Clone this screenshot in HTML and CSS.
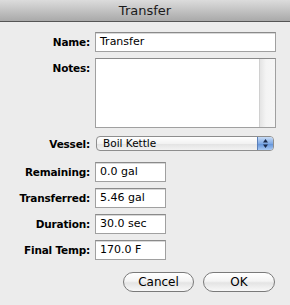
FILE: index.html
```html
<!DOCTYPE html>
<html>
<head>
<meta charset="utf-8">
<link rel="stylesheet" href="styles.css">
</head>
<body>
<div class="titlebar">Transfer</div>
<div class="form">
  <div class="row r-name">
    <label class="lbl">Name:</label>
    <div class="field wide">Transfer</div>
  </div>
  <div class="row r-notes">
    <label class="lbl top">Notes:</label>
    <div class="notes"><div class="notes-area"></div><div class="scroll"></div></div>
  </div>
  <div class="row r-vessel">
    <label class="lbl">Vessel:</label>
    <div class="popup"><span class="popup-text">Boil Kettle</span><span class="stepper"><svg width="7" height="11" viewBox="0 0 7 11"><path d="M3.5 1 L6 4.5 H1 Z" fill="#1a2a4a"/><path d="M3.5 10 L6 6.5 H1 Z" fill="#1a2a4a"/></svg></span></div>
  </div>
  <div class="small-rows">
    <div class="row">
      <label class="lbl">Remaining:</label>
      <div class="field short">0.0 gal</div>
    </div>
    <div class="row">
      <label class="lbl">Transferred:</label>
      <div class="field short">5.46 gal</div>
    </div>
    <div class="row">
      <label class="lbl">Duration:</label>
      <div class="field short">30.0 sec</div>
    </div>
    <div class="row">
      <label class="lbl">Final Temp:</label>
      <div class="field short">170.0 F</div>
    </div>
  </div>
  <div class="buttons">
    <button class="btn cancel">Cancel</button>
    <button class="btn ok">OK</button>
  </div>
</div>
</body>
</html>
```
FILE: styles.css
```css
html, body {
  margin: 0;
  padding: 0;
}
body {
  width: 290px;
  height: 305px;
  background: #ececec;
  font-family: "DejaVu Sans", "Liberation Sans", sans-serif;
  font-size: 11px;
  color: #000;
  overflow: hidden;
}
.titlebar {
  height: 21px;
  border-bottom: 1px solid #555;
  background: linear-gradient(#dcdcdc, #a9a9a9);
  text-align: center;
  font-size: 13px;
  line-height: 21px;
  color: #1a1a1a;
}
.form {
  padding-top: 10px;
}
.row {
  display: grid;
  grid-template-columns: 90px auto;
  column-gap: 5px;
  align-items: center;
}
.lbl {
  text-align: right;
  font-weight: bold;
  font-size: 10.5px;
  letter-spacing: -0.2px;
}
.lbl.top {
  align-self: start;
  padding-top: 4px;
}
.field {
  box-sizing: border-box;
  height: 20px;
  background: #fff;
  border: 1px solid #a0a0a0;
  border-top-color: #8a8a8a;
  box-shadow: inset 0 1px 0 #d8d8d8;
  padding-left: 4px;
  line-height: 18px;
  font-size: 11px;
}
.field.wide {
  width: 181px;
}
.field.short {
  width: 71px;
}
.r-notes {
  margin-top: 6px;
}
.notes {
  box-sizing: border-box;
  width: 181px;
  height: 70px;
  border: 1px solid #a0a0a0;
  border-top-color: #8a8a8a;
  display: flex;
  background: #fff;
}
.notes-area {
  flex: 1;
  background: #fff;
}
.scroll {
  width: 15px;
  background: linear-gradient(to right, #e4e4e4, #f4f4f4 40%, #f6f6f6);
  border-left: 1px solid #d0d0d0;
}
.r-vessel {
  margin-top: 8px;
}
.popup {
  box-sizing: border-box;
  width: 178px;
  height: 15px;
  margin-left: 1px;
  border: 1px solid #8e8e8e;
  border-radius: 4px;
  background: linear-gradient(#ffffff, #f2f2f2 50%, #e2e2e2 51%, #f2f2f2);
  display: flex;
  align-items: center;
  overflow: hidden;
}
.popup-text {
  flex: 1;
  padding-left: 6px;
  font-size: 10.5px;
  line-height: 13px;
}
.stepper {
  width: 15px;
  height: 13px;
  background: linear-gradient(#c8dcf6, #7fa9e4 50%, #5e90d8 51%, #a9c9f3);
  border-left: 1px solid #5a7fb8;
  display: flex;
  align-items: center;
  justify-content: center;
}
.small-rows {
  margin-top: 11px;
  display: flex;
  flex-direction: column;
  gap: 6px;
}
.small-rows .field {
  height: 20px;
}
.buttons {
  display: flex;
  justify-content: flex-end;
  gap: 9px;
  padding-right: 15px;
  margin-top: 12px;
}
.btn {
  box-sizing: border-box;
  height: 20px;
  border: 1px solid #7a7a7a;
  border-radius: 10px;
  background: linear-gradient(#ffffff, #f4f4f4 45%, #e4e4e4 55%, #f8f8f8);
  font-family: "DejaVu Sans", "Liberation Sans", sans-serif;
  font-size: 12px;
  color: #000;
  padding: 0;
}
.btn.cancel {
  width: 71px;
}
.btn.ok {
  width: 72px;
}
```
